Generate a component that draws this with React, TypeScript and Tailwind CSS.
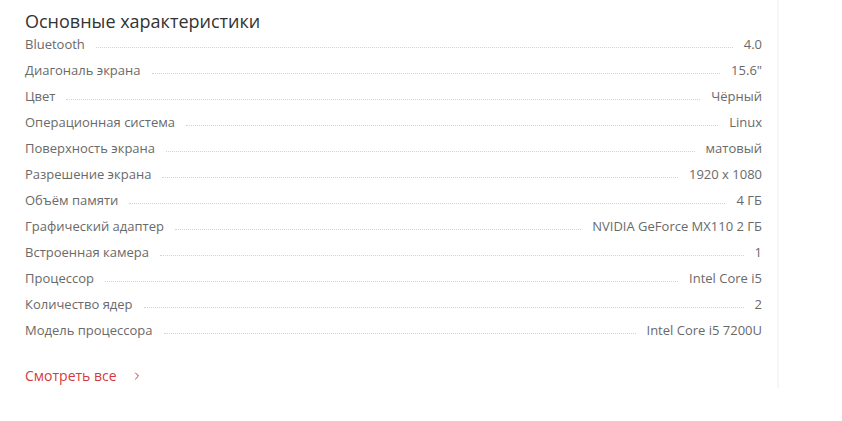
import { ChevronRight } from "lucide-react";

const specs = [
	{ label: "Bluetooth", value: "4.0" },
	{ label: "Диагональ экрана", value: "15.6\"" },
	{ label: "Цвет", value: "Чёрный" },
	{ label: "Операционная система", value: "Linux" },
	{ label: "Поверхность экрана", value: "матовый" },
	{ label: "Разрешение экрана", value: "1920 x 1080" },
	{ label: "Объём памяти", value: "4 ГБ" },
	{ label: "Графический адаптер", value: "NVIDIA GeForce MX110 2 ГБ" },
	{ label: "Встроенная камера", value: "1" },
	{ label: "Процессор", value: "Intel Core i5" },
	{ label: "Количество ядер", value: "2" },
	{ label: "Модель процессора", value: "Intel Core i5 7200U" },
];

export default function App() {
	return (
		<div className="w-[842px] h-[421px] bg-white" style={{ fontFamily: '"Open Sans", "Noto Sans", sans-serif' }}>
			<div className="w-[779px] h-[388px] border-r-2 border-[#f6f6f6] pl-[25px] pr-[15px] pt-[9px]">
				<h2 className="text-[18px] leading-[24px] text-[#333]">Основные характеристики</h2>
				<div className="mt-[-1px]">
					{specs.map((s) => (
						<div key={s.label} className="flex items-end h-[26px] pb-[5px] text-[13px] leading-[18px] text-[#6a6a6a]">
							<span>{s.label}</span>
							<span className="flex-1 mx-[11px] mb-[5px] border-b border-dotted border-[#d2d2d2]" />
							<span>{s.value}</span>
						</div>
					))}
				</div>
				<a href="#" className="mt-[22px] inline-flex items-center text-[14px] leading-[20px] text-[#d33a3f]">
					Смотреть все
					<ChevronRight className="ml-[14px] w-[12px] h-[12px] text-[#b03a3f]" strokeWidth={2} />
				</a>
			</div>
		</div>
	);
}
